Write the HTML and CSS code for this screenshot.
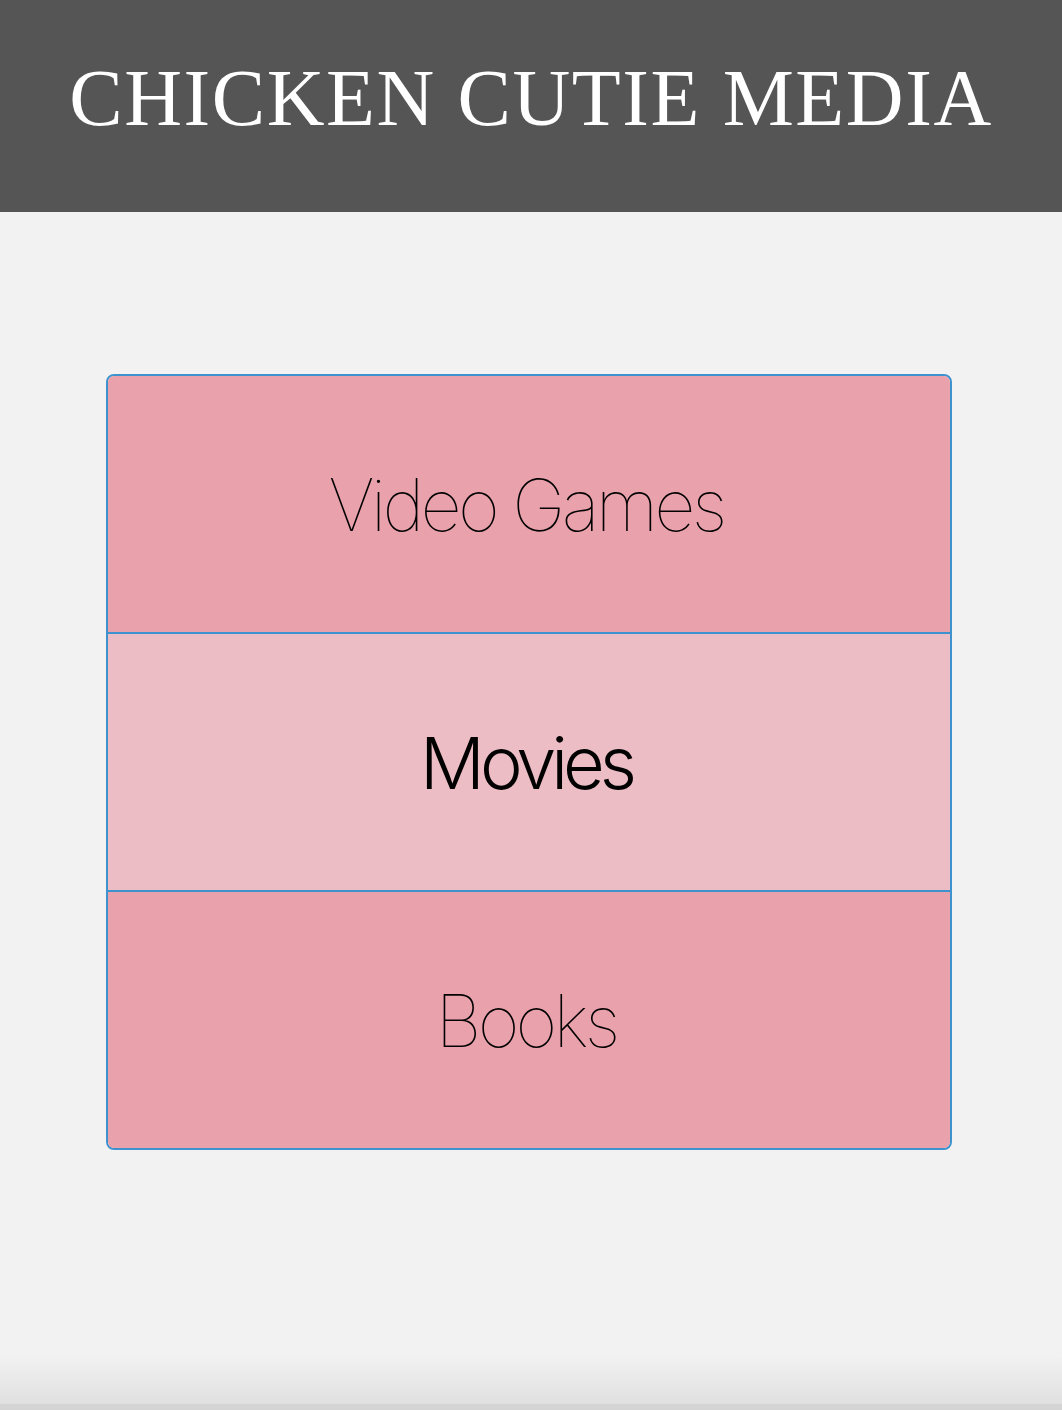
FILE: index.html
```html
<!DOCTYPE html>
<html lang="en">
<head>
<meta charset="utf-8">
<title>Chicken Cutie Media</title>
<link rel="stylesheet" href="styles.css">
</head>
<body>
<header class="site-header">
  <h1 class="site-title">CHICKEN CUTIE MEDIA</h1>
</header>
<main class="content">
  <nav class="menu">
    <a class="menu-item" href="#">Video Games</a>
    <a class="menu-item active" href="#">Movies</a>
    <a class="menu-item" href="#">Books</a>
  </nav>
</main>
</body>
</html>
```

FILE: styles.css
```css
html {
  background: linear-gradient(to bottom, #f2f2f2 1355px, #e0e0e0 1404px, #d4d4d4 1404px, #d4d4d4 1410px);
}
body {
  margin: 0;
  min-height: 1410px;
  font-family: "Liberation Sans", Arial, sans-serif;
}
.site-header {
  background: #555555;
  height: 212px;
  display: flex;
  justify-content: center;
  align-items: flex-start;
  box-sizing: border-box;
  padding-top: 50px;
}
.site-title {
  margin: 0;
  color: #ffffff;
  font-family: "Liberation Serif", "Times New Roman", serif;
  font-weight: 400;
  font-size: 80px;
  line-height: 96px;
  letter-spacing: 1.6px;
}
.content {
  padding: 162px 0 0 106px;
  display: flex;
  justify-content: flex-start;
}
.menu {
  width: 846px;
  display: flex;
  flex-direction: column;
  border: 2px solid #3e93cf;
  border-radius: 8px;
  overflow: hidden;
  box-sizing: border-box;
}
.menu-item {
  height: 256px;
  display: flex;
  align-items: center;
  justify-content: center;
  padding-right: 6px;
  background: #e9a1ab;
  color: #000;
  text-decoration: none;
  font-family: Inter, "Liberation Sans", sans-serif;
  font-weight: 100;
  font-size: 72px;
  letter-spacing: -3.8px;
}
.menu-item + .menu-item {
  border-top: 2px solid #3e93cf;
}
.menu-item.active {
  background: #ecbdc4;
  font-weight: 300;
  letter-spacing: -5px;
}
```
